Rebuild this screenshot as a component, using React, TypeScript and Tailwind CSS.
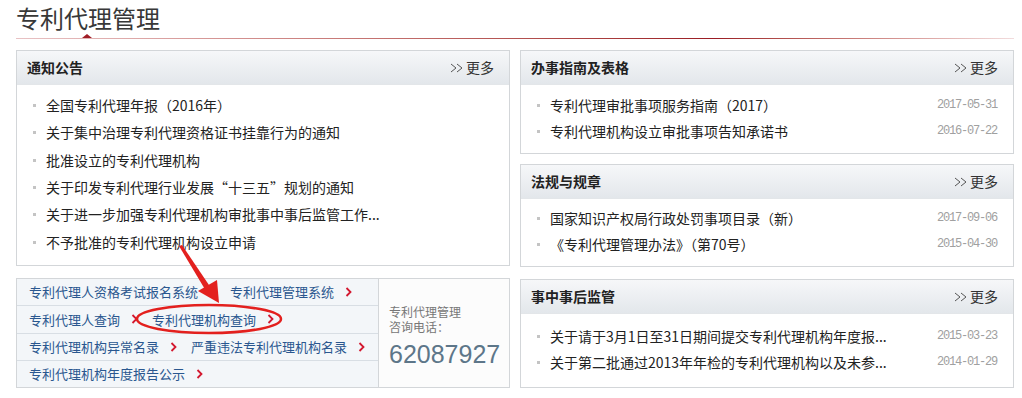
import { Fragment } from 'react';

const cn = { fontFamily: '"Noto Sans CJK SC", "Noto Sans", sans-serif' };
const mono = { fontFamily: '"Liberation Mono", "DejaVu Sans Mono", monospace' };

const notices = [
  '全国专利代理年报（2016年）',
  '关于集中治理专利代理资格证书挂靠行为的通知',
  '批准设立的专利代理机构',
  '关于印发专利代理行业发展“十三五”规划的通知',
  '关于进一步加强专利代理机构审批事中事后监管工作...',
  '不予批准的专利代理机构设立申请',
];

const guides = [
  { title: '专利代理审批事项服务指南（2017）', date: '2017-05-31' },
  { title: '专利代理机构设立审批事项告知承诺书', date: '2016-07-22' },
];

const rules = [
  { title: '国家知识产权局行政处罚事项目录（新）', date: '2017-09-06' },
  { title: '《专利代理管理办法》（第70号）', date: '2015-04-30' },
];

const supervise = [
  { title: '关于请于3月1日至31日期间提交专利代理机构年度报...', date: '2015-03-23' },
  { title: '关于第二批通过2013年年检的专利代理机构以及未参...', date: '2014-01-29' },
];

const linkRows = [
  ['专利代理人资格考试报名系统', '专利代理管理系统'],
  ['专利代理人查询', '专利代理机构查询'],
  ['专利代理机构异常名录', '严重违法专利代理机构名录'],
  ['专利代理机构年度报告公示'],
];

const PanelHead = ({ title }: { title: string }) => (
  <div className="flex h-[34px] items-center justify-between border-b border-[#e3e6e9] bg-gradient-to-b from-[#f6f7f9] to-[#e3e7eb] pl-[10px] pr-[15px]">
    <span className="text-[14px] font-bold text-[#222]">{title}</span>
    <span className="flex items-center text-[14px] text-[#333]">
      <svg width="14" height="10" viewBox="0 0 14 10" className="mr-[2px]">
        <polyline points="1,1 6,5 1,9" fill="none" stroke="#555" strokeWidth="1" />
        <polyline points="7,1 12,5 7,9" fill="none" stroke="#555" strokeWidth="1" />
      </svg>
      更多
    </span>
  </div>
);

const Bullet = () => <span className="mr-[10px] h-[3px] w-[3px] shrink-0 bg-[#c4c4c4]" />;

const DatedList = ({ items, pt }: { items: { title: string; date: string }[]; pt: string }) => (
  <ul className={`${pt} pl-[16px] pr-[16px]`}>
    {items.map((it) => (
      <li key={it.title} className="flex h-[26px] items-center text-[14px] text-[#222]">
        <Bullet />
        <span className="flex-1 truncate">{it.title}</span>
        <span className="text-[12px] tracking-[-1.2px] text-[#a0a0a0]" style={mono}>
          {it.date}
        </span>
      </li>
    ))}
  </ul>
);

const Chevron = () => (
  <svg width="7" height="10" viewBox="0 0 7 10" className="ml-[11px] mr-[14px] shrink-0">
    <polyline points="1.5,1 5.5,5 1.5,9" fill="none" stroke="#d3182f" strokeWidth="1.8" />
  </svg>
);

export default function App() {
  return (
    <div className="relative h-[398px] w-[1022px] overflow-hidden bg-white" style={cn}>
      <div className="px-[16px]">
        <h1 className="pt-[1px] text-[24px] leading-[34px] text-[#383838]">专利代理管理</h1>
        <div className="relative mt-[3px] h-[1px] w-[998px] bg-gradient-to-r from-[#e8c2c4] via-[#9a1b24] via-70% to-[#f2dcdd]">
          <span className="absolute left-[66px] top-[-4px] h-0 w-0 border-x-[5px] border-b-[4px] border-x-transparent border-b-[#a01d26]" />
        </div>

        <div className="mt-[11px] grid grid-cols-[494px_494px] gap-x-[10px]">
          {/* left column */}
          <div className="flex flex-col">
            <div className="h-[216px] border border-[#d3d6d9]">
              <PanelHead title="通知公告" />
              <ul className="pl-[16px] pt-[7px]">
                {notices.map((n) => (
                  <li key={n} className="flex h-[27.3px] items-center text-[14px] text-[#222]">
                    <Bullet />
                    {n}
                  </li>
                ))}
              </ul>
            </div>

            <div className="mt-[12px] flex h-[110px] border border-[#d3d6d9]">
              <div className="flex w-[362px] flex-col border-r border-[#d3d6d9] bg-[#f3f6f9]">
                {linkRows.map((row, i) => (
                  <div
                    key={i}
                    className={`flex flex-1 items-center whitespace-nowrap pl-[12px] text-[13px] text-[#2a578f] ${i > 0 ? 'border-t border-[#d8dee4]' : ''}`}
                  >
                    {row.map((l) => (
                      <Fragment key={l}>
                        <span>{l}</span>
                        <Chevron />
                      </Fragment>
                    ))}
                  </div>
                ))}
              </div>
              <div className="flex flex-1 flex-col bg-[#fcfcfc] pl-[10px] pt-[25px]">
                <span className="text-[12px] leading-[15px] text-[#777]">专利代理管理</span>
                <span className="text-[12px] leading-[15px] text-[#777]">咨询电话：</span>
                <span
                  className="mt-[6px] text-[25px] leading-[28px] text-[#5d7689]"
                  style={{ fontFamily: '"Liberation Sans", Arial, sans-serif' }}
                >
                  62087927
                </span>
              </div>
            </div>
          </div>

          {/* right column */}
          <div className="flex flex-col">
            <div className="h-[104px] border border-[#d3d6d9]">
              <PanelHead title="办事指南及表格" />
              <DatedList items={guides} pt="pt-[7px]" />
            </div>
            <div className="mt-[10px] h-[103px] border border-[#d3d6d9]">
              <PanelHead title="法规与规章" />
              <DatedList items={rules} pt="pt-[6px]" />
            </div>
            <div className="mt-[12px] h-[109px] border border-[#d3d6d9]">
              <PanelHead title="事中事后监管" />
              <DatedList items={supervise} pt="pt-[9px]" />
            </div>
          </div>
        </div>
      </div>

      {/* red annotation: arrow and ellipse */}
      <svg className="pointer-events-none absolute left-0 top-0" width="1022" height="398">
        <polygon points="179,246 182,245 211,288 206,291" fill="#e3201e" />
        <polygon points="198,291 219,303 217,280" fill="#e3201e" />
        <ellipse cx="209" cy="319" rx="72" ry="14" fill="none" stroke="#e3201e" strokeWidth="2.5" />
      </svg>
    </div>
  );
}
